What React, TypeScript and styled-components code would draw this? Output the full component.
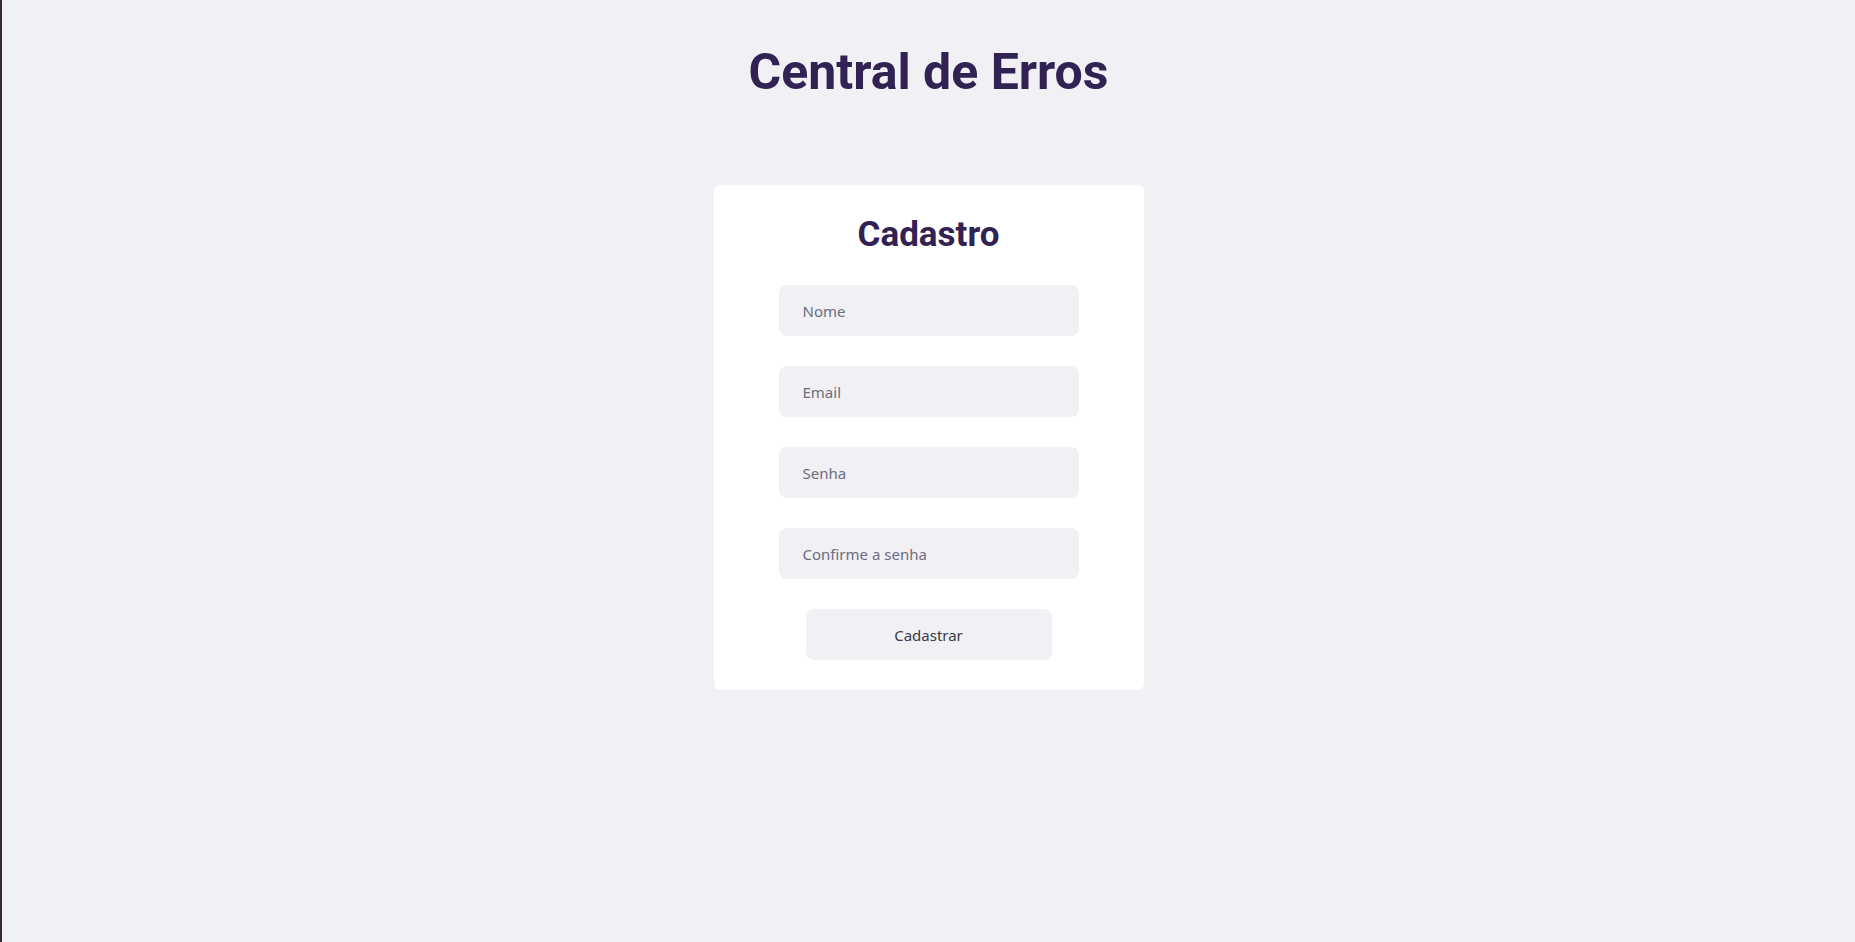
import React from "react";
import styled, { createGlobalStyle } from "styled-components";

const GlobalStyle = createGlobalStyle`
    * {
        margin: 0;
        padding: 0;
        box-sizing: border-box;
    }

    body {
        background: #f0f0f5;
        font-family: Roboto, "Liberation Sans", sans-serif;
        -webkit-font-smoothing: antialiased;
    }
`;

const fields = ["Nome", "Email", "Senha", "Confirme a senha"];

export const App = () => {
    return (
        <Page>
            <GlobalStyle />
            <Title>Central de Erros</Title>
            <Card>
                <CardTitle>Cadastro</CardTitle>
                <Form onSubmit={(e) => e.preventDefault()}>
                    {fields.map((f) => (
                        <Input
                            key={f}
                            placeholder={f}
                            type={f.includes("enha") ? "password" : "text"}
                        />
                    ))}
                    <Button type="submit">Cadastrar</Button>
                </Form>
            </Card>
        </Page>
    );
};

export default App;

const Page = styled.div`
    min-height: 100vh;
    border-left: 2px solid #3b2b2d;
    display: flex;
    flex-direction: column;
    align-items: center;
    padding-top: 42px;
`;

const Title = styled.h1`
    font-family: Roboto, "Liberation Sans", sans-serif;
    font-size: 50px;
    font-weight: 700;
    line-height: 60px;
    color: #322153;
`;

const Card = styled.div`
    width: 430px;
    margin-top: 83px;
    background: #fff;
    border-radius: 6px;
    padding: 31px 0 30px;
    display: flex;
    flex-direction: column;
    align-items: center;
`;

const CardTitle = styled.h2`
    font-size: 35px;
    font-weight: 700;
    line-height: 38px;
    color: #322153;
`;

const Form = styled.form`
    margin-top: 31px;
    display: flex;
    flex-direction: column;
    align-items: center;
    gap: 30px;
`;

const Input = styled.input`
    width: 300px;
    height: 51px;
    border: 0;
    border-radius: 8px;
    background: #f0f0f5;
    padding: 0 24px;
    font-family: "Noto Sans", "Open Sans", sans-serif;
    font-size: 15px;
    color: #322153;
    outline: none;

    &::placeholder {
        color: #6c6c80;
    }
`;

const Button = styled.button`
    width: 246px;
    height: 51px;
    border: 0;
    border-radius: 8px;
    background: #f0f0f5;
    font-family: "Noto Sans", "Open Sans", sans-serif;
    font-size: 15px;
    color: #3a3a48;
    cursor: pointer;
`;
